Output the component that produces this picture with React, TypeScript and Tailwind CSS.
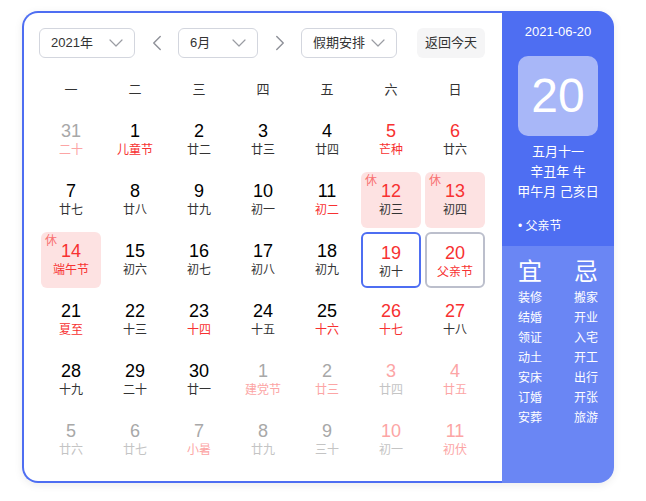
import React from 'react';
import { ChevronDown, ChevronLeft, ChevronRight } from 'lucide-react';

type Day = {
  n: number;
  l: string;
  nc?: string;
  lc?: string;
  rest?: boolean;
  box?: 'today' | 'sel';
};

const RED = 'text-[#f73131]';
const LRED = 'text-[#fca5a5]';
const GRAY = 'text-[#a8a8a8]';
const LGRAY = 'text-[#c4c4c4]';

const days: Day[] = [
  { n: 31, l: '二十', nc: GRAY, lc: LRED },
  { n: 1, l: '儿童节', lc: RED },
  { n: 2, l: '廿二' },
  { n: 3, l: '廿三' },
  { n: 4, l: '廿四' },
  { n: 5, l: '芒种', nc: RED, lc: RED },
  { n: 6, l: '廿六', nc: RED },
  { n: 7, l: '廿七' },
  { n: 8, l: '廿八' },
  { n: 9, l: '廿九' },
  { n: 10, l: '初一' },
  { n: 11, l: '初二', lc: RED },
  { n: 12, l: '初三', nc: RED, rest: true },
  { n: 13, l: '初四', nc: RED, rest: true },
  { n: 14, l: '端午节', nc: RED, lc: RED, rest: true },
  { n: 15, l: '初六' },
  { n: 16, l: '初七' },
  { n: 17, l: '初八' },
  { n: 18, l: '初九' },
  { n: 19, l: '初十', nc: RED, box: 'sel' },
  { n: 20, l: '父亲节', nc: RED, lc: RED, box: 'today' },
  { n: 21, l: '夏至', lc: RED },
  { n: 22, l: '十三' },
  { n: 23, l: '十四', lc: RED },
  { n: 24, l: '十五' },
  { n: 25, l: '十六', lc: RED },
  { n: 26, l: '十七', nc: RED, lc: RED },
  { n: 27, l: '十八', nc: RED },
  { n: 28, l: '十九' },
  { n: 29, l: '二十' },
  { n: 30, l: '廿一' },
  { n: 1, l: '建党节', nc: GRAY, lc: LRED },
  { n: 2, l: '廿三', nc: GRAY, lc: LRED },
  { n: 3, l: '廿四', nc: LRED, lc: LGRAY },
  { n: 4, l: '廿五', nc: LRED, lc: LRED },
  { n: 5, l: '廿六', nc: GRAY, lc: LGRAY },
  { n: 6, l: '廿七', nc: GRAY, lc: LGRAY },
  { n: 7, l: '小暑', nc: GRAY, lc: LRED },
  { n: 8, l: '廿九', nc: GRAY, lc: LGRAY },
  { n: 9, l: '三十', nc: GRAY, lc: LGRAY },
  { n: 10, l: '初一', nc: LRED, lc: LGRAY },
  { n: 11, l: '初伏', nc: LRED, lc: LRED },
];

const weekdays = ['一', '二', '三', '四', '五', '六', '日'];
const yi = ['装修', '结婚', '领证', '动土', '安床', '订婚', '安葬'];
const ji = ['搬家', '开业', '入宅', '开工', '出行', '开张', '旅游'];

const font = { fontFamily: '"Liberation Sans", Arial, "Noto Sans CJK SC", sans-serif' };

function Select({ label, width }: { label: string; width: string }) {
  return (
    <div
      className={`${width} h-[30px] flex items-center justify-between pl-[11px] pr-[6px] border border-[#d3d6de] rounded-[6px] bg-white text-[13px] text-[#333]`}
    >
      <span>{label}</span>
      <ChevronDown size={24} strokeWidth={1.2} className="text-[#9a9ca3]" />
    </div>
  );
}

function Cell({ d }: { d: Day }) {
  let cls = 'relative h-[56px] rounded-[6px] flex flex-col items-center pt-[8px]';
  if (d.rest) cls += ' bg-[#fde2e2]';
  if (d.box === 'sel') cls += ' border-2 border-[#4e6ef2] pt-[6px]';
  if (d.box === 'today') cls += ' border-2 border-[#bcbfcc] pt-[6px]';
  return (
    <div className={cls}>
      {d.rest && (
        <span className="absolute top-[1px] left-[4px] text-[12px] leading-[16px] text-[#f87171]">休</span>
      )}
      <span className={`text-[18px] leading-[22px] ${d.nc ?? 'text-black'}`}>{d.n}</span>
      <span className={`text-[12px] leading-[16px] ${d.lc ?? 'text-[#333]'}`}>{d.l}</span>
    </div>
  );
}

export default function App() {
  return (
    <div className="w-[646px] h-[501px] bg-white pt-[11px] pl-[22px]" style={font}>
      <div className="flex w-[592px] h-[472px] rounded-[16px] shadow-[0_2px_8px_rgba(0,0,0,0.08)]">
        <div className="w-[480px] h-full border-2 border-r-0 border-[#4e6ef2] rounded-l-[16px] bg-white pl-[17px] pt-[15px]">
          <div className="flex items-center -ml-[2px]">
            <Select label="2021年" width="w-[96px]" />
            <div className="w-[43px] flex justify-center text-[#8e9098]">
              <ChevronLeft size={26} strokeWidth={1.3} />
            </div>
            <Select label="6月" width="w-[80px]" />
            <div className="w-[43px] flex justify-center text-[#8e9098]">
              <ChevronRight size={26} strokeWidth={1.3} />
            </div>
            <Select label="假期安排" width="w-[96px]" />
            <div className="ml-[20px] w-[68px] h-[30px] rounded-[6px] bg-[#f5f5f6] flex items-center justify-center text-[13px] text-[#333]">
              返回今天
            </div>
          </div>
          <div className="grid grid-cols-7 gap-x-[4px] w-[444px] mt-[20px] h-[24px]">
            {weekdays.map((w) => (
              <div key={w} className="text-center text-[13px] leading-[24px] text-[#333]">
                {w}
              </div>
            ))}
          </div>
          <div className="grid grid-cols-7 gap-[4px] w-[444px] mt-[10px]">
            {days.map((d, i) => (
              <Cell key={i} d={d} />
            ))}
          </div>
        </div>
        <div className="w-[112px] h-full rounded-r-[16px] overflow-hidden flex flex-col text-white">
          <div className="h-[235px] bg-[#4e6ef2] flex flex-col items-center pt-[12px]">
            <div className="text-[13px] leading-[18px]">2021-06-20</div>
            <div className="mt-[15px] w-[80px] h-[80px] rounded-[10px] bg-[#a8b7f8] flex items-center justify-center text-[48px] leading-none">
              20
            </div>
            <div className="mt-[6px] flex flex-col items-center text-[13px] leading-[20px]">
              <span>五月十一</span>
              <span>辛丑年 牛</span>
              <span>甲午月 己亥日</span>
            </div>
            <div className="self-start pl-[16px] mt-[14px] text-[12px] leading-[20px]">• 父亲节</div>
          </div>
          <div className="flex-1 bg-[#6a86f4] flex pl-[16px] pt-[13px] gap-[32px]">
            <div className="flex flex-col items-center w-[24px]">
              <div className="text-[24px] leading-[26px]">宜</div>
              <div className="mt-[3px] flex flex-col text-[12px] leading-[20px]">
                {yi.map((t) => (
                  <span key={t}>{t}</span>
                ))}
              </div>
            </div>
            <div className="flex flex-col items-center w-[24px]">
              <div className="text-[24px] leading-[26px]">忌</div>
              <div className="mt-[3px] flex flex-col text-[12px] leading-[20px]">
                {ji.map((t) => (
                  <span key={t}>{t}</span>
                ))}
              </div>
            </div>
          </div>
        </div>
      </div>
    </div>
  );
}
